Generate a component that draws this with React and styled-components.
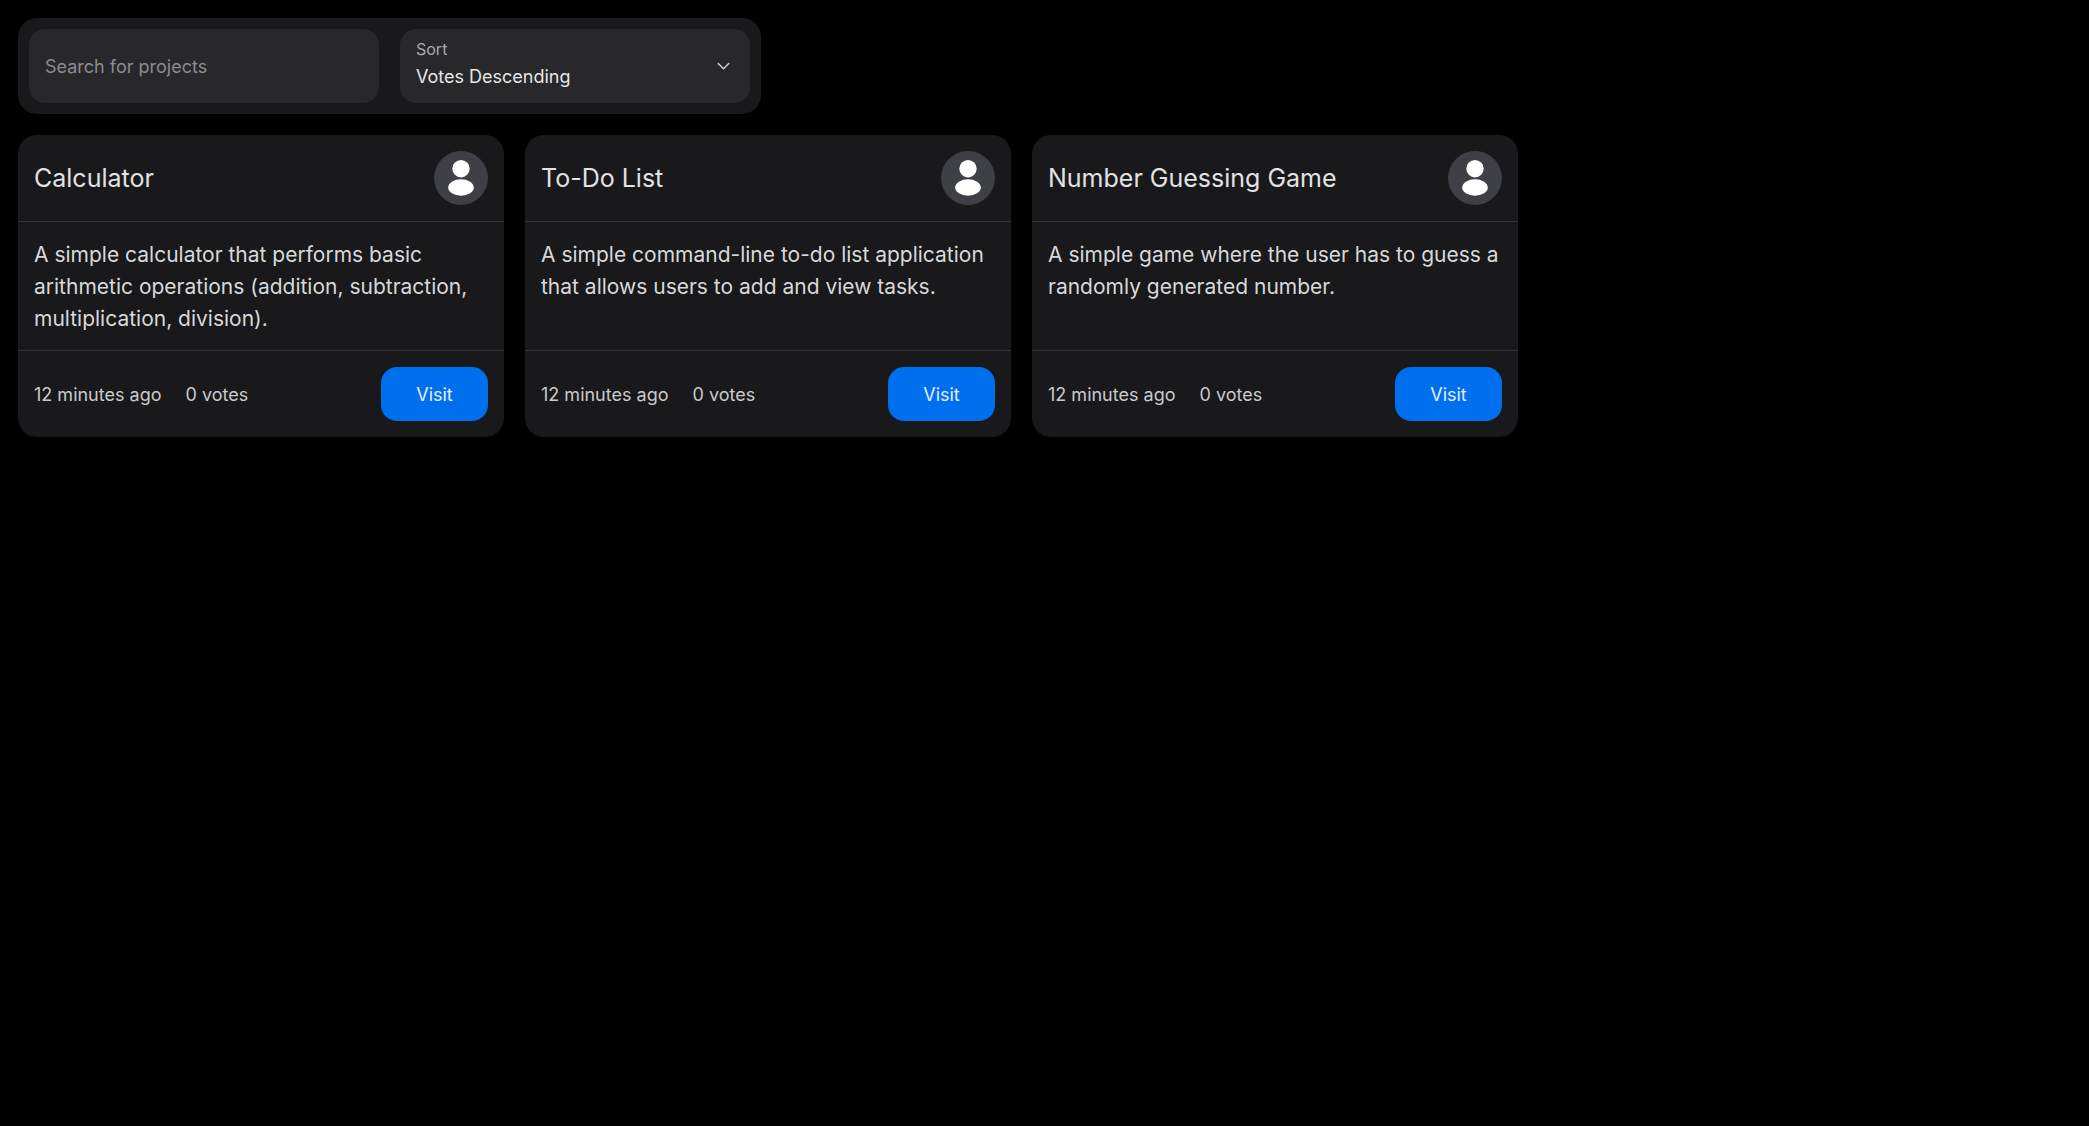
import React from "react";
import styled, { createGlobalStyle } from "styled-components";

const GlobalStyle = createGlobalStyle`
  *, *::before, *::after { box-sizing: border-box; }
  body {
    margin: 0;
    background: #000;
    color: #ecedee;
    font-family: Inter, "Open Sans", sans-serif;
    -webkit-font-smoothing: antialiased;
  }
`;

const Page = styled.main`
  display: flex;
  flex-direction: column;
  gap: 21px;
  padding: 18px;
`;

const Toolbar = styled.form`
  display: flex;
  gap: 21px;
  width: 100%;
  max-width: 743px;
  padding: 11px;
  border-radius: 19px;
  background: #19191b;
`;

const SearchInput = styled.input`
  flex: 1;
  min-width: 0;
  height: 74px;
  padding: 0 16px;
  border: 0;
  border-radius: 16px;
  background: #28282a;
  color: #ecedee;
  font: inherit;
  font-size: 18px;
  outline: none;

  &::placeholder { color: #8b8b94; opacity: 1; }
`;

const SelectField = styled.div`
  display: flex;
  flex: 1;
  align-items: center;
  min-width: 0;
  height: 74px;
  padding: 0 16px;
  border-radius: 16px;
  background: #28282a;
`;

const SelectText = styled.div`
  display: flex;
  flex: 1;
  flex-direction: column;
  min-width: 0;
  padding-bottom: 6px;
`;

const SelectLabel = styled.label`
  color: #a9a9ad;
  font-size: 16px;
  line-height: 27px;
`;

const Select = styled.select`
  width: 100%;
  height: 27px;
  padding: 0;
  border: 0;
  appearance: none;
  background: transparent;
  color: #e6e6e7;
  font: inherit;
  font-size: 18px;
  line-height: 27px;
  outline: none;
`;

const CardGrid = styled.section`
  display: grid;
  grid-template-columns: repeat(3, minmax(0, 486px));
  gap: 21px;
`;

const Card = styled.article`
  display: flex;
  flex-direction: column;
  border-radius: 19px;
  background: #19191b;
`;

const CardHeader = styled.header`
  display: flex;
  align-items: center;
  justify-content: space-between;
  padding: 16px;
`;

const CardTitle = styled.h2`
  margin: 0;
  color: #e2e2e4;
  font-size: 25px;
  font-weight: 400;
  line-height: 37px;
`;

const Avatar = styled.span`
  display: flex;
  flex-shrink: 0;
  width: 54px;
  height: 54px;
  border-radius: 50%;
  background: #3f3f46;
`;

const CardBody = styled.p`
  flex: 1;
  margin: 0;
  padding: 17px 16px 15px;
  border: solid #333336;
  border-width: 1px 0;
  color: #d8d8da;
  font-size: 21px;
  line-height: 32px;
`;

const CardFooter = styled.footer`
  display: flex;
  align-items: center;
  gap: 24px;
  padding: 16px;
  color: #cacacc;
  font-size: 18px;
  line-height: 27px;
`;

const VisitButton = styled.button`
  width: 107px;
  height: 54px;
  margin-left: auto;
  border: 0;
  border-radius: 16px;
  background: #006fee;
  color: #e3effd;
  font: inherit;
  cursor: pointer;
`;

const projects = [
  {
    title: "Calculator",
    description:
      "A simple calculator that performs basic arithmetic operations (addition, subtraction, multiplication, division).",
  },
  {
    title: "To-Do List",
    description:
      "A simple command-line to-do list application that allows users to add and view tasks.",
  },
  {
    title: "Number Guessing Game",
    description:
      "A simple game where the user has to guess a randomly generated number.",
  },
];

function PersonIcon() {
  return (
    <svg width="54" height="54" viewBox="0 0 54 54" fill="#fff" aria-hidden="true">
      <circle cx="27" cy="17.7" r="8.7" />
      <ellipse cx="27" cy="36.5" rx="12.8" ry="8.3" />
    </svg>
  );
}

function ChevronIcon() {
  return (
    <svg
      width="21"
      height="21"
      viewBox="0 0 24 24"
      fill="none"
      stroke="#d0d0d2"
      strokeWidth="1.7"
      strokeLinecap="round"
      strokeLinejoin="round"
      aria-hidden="true"
    >
      <path d="m6 8.5 6 6 6-6" />
    </svg>
  );
}

function ProjectCard({ title, description }) {
  return (
    <Card>
      <CardHeader>
        <CardTitle>{title}</CardTitle>
        <Avatar role="img" aria-label="avatar">
          <PersonIcon />
        </Avatar>
      </CardHeader>
      <CardBody>{description}</CardBody>
      <CardFooter>
        <span>12 minutes ago</span>
        <span>0 votes</span>
        <VisitButton type="button">Visit</VisitButton>
      </CardFooter>
    </Card>
  );
}

export default function App() {
  return (
    <>
      <GlobalStyle />
      <Page>
        <Toolbar onSubmit={(event) => event.preventDefault()}>
          <SearchInput
            type="text"
            placeholder="Search for projects"
            aria-label="Search for projects"
          />
          <SelectField>
            <SelectText>
              <SelectLabel htmlFor="sort">Sort</SelectLabel>
              <Select id="sort" defaultValue="votes-desc">
                <option value="votes-desc">Votes Descending</option>
                <option value="votes-asc">Votes Ascending</option>
              </Select>
            </SelectText>
            <ChevronIcon />
          </SelectField>
        </Toolbar>
        <CardGrid>
          {projects.map((project) => (
            <ProjectCard key={project.title} {...project} />
          ))}
        </CardGrid>
      </Page>
    </>
  );
}
